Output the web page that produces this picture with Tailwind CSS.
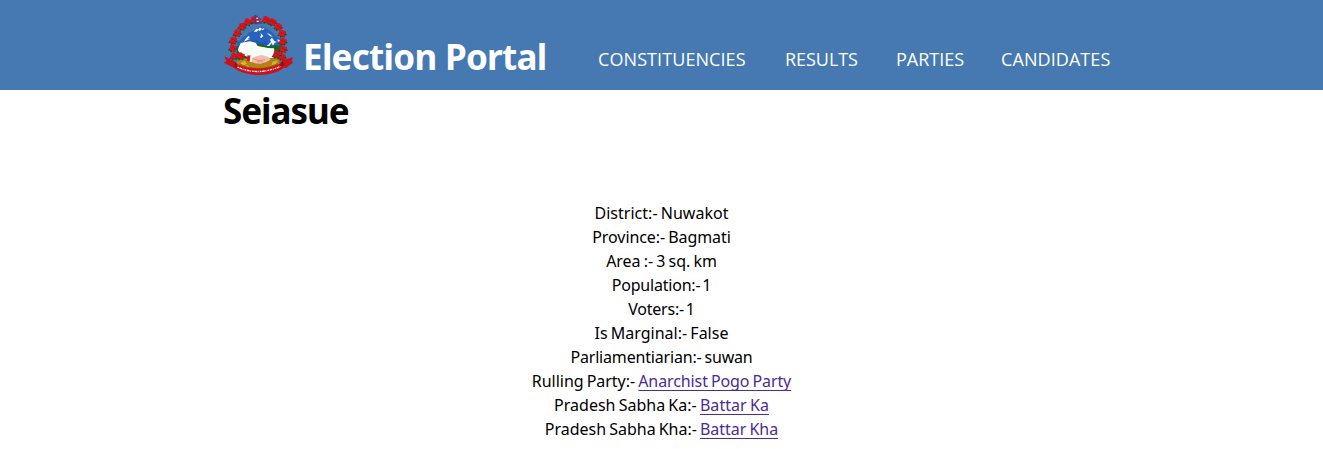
<!DOCTYPE html>
<html lang="en">
<head>
<meta charset="utf-8">
<title>Election Portal</title>
<script src="https://cdn.jsdelivr.net/npm/@tailwindcss/browser@4"></script>
</head>
<body class="bg-white text-black font-['Noto_Sans',sans-serif] overflow-hidden">
<header class="h-[90px] bg-[#4679b2] text-white flex items-start pl-[224px]">
  <svg class="w-[70px] h-[62px] mt-[14px] shrink-0" viewBox="12 12 210 186" fill="none">
    <defs>
      <g id="flower">
        <path d="M-11 2l-4 7 7 0 1 6 6-4 8 3 0-6 7-2-5-8z" fill="#17521f"/>
        <path d="M-3-10l6 1 2 3 6 1 0 7-3 2-1 6-7 0-4-2-6 0-1-7 2-3 1-6z" fill="#e0101c"/>
        <path d="M-4-3h3v3h-3zM3 1h3v3h-3z" fill="#9f0b19"/>
      </g>
    </defs>
    <path d="M50 103Q64 80 78 77L88 67 103 62 114 52 127 49 140 56 151 62 163 74 180 86 186 103 180 122H52z" fill="#2762be"/>
    <path d="M101 65l9-9 5 2 5-6 6 5 8-4-5 8-5-3-4 6-4-4-6 5zM76 88l9-10 5 3-7 5 7 0-9 9-11 4zM140 68l10 5 9 9-10-5zM122 69l8 9-7 7-3-5 3-2zM65 104l12-9 4 4-15 9zM150 89l6-6 7 10 8 3-7 2-5 9-4-8-7 9-8-1 13-11zM173 87l9 6 3 8-12-8z" fill="#f4f8fc"/>
    <path d="M70 97l17-9 8 7 14-6 13 8 17-4 8 10-23 6-37-6z" fill="#2157b5"/>
    <path d="M51 111l16-11-9 21 29 14 25 5 29 5 22 1 16-8-9 22-27 12-41-1-29-9-14-15-9-17z" fill="#18601f"/>
    <path d="M96 104l25-2 20 7 26-3 19 1-6 22-14 10-28-13-28-8z" fill="#1c6422"/>
    <path d="M62 99L89 94 107 98 113 108 144 114 162 115 164 138 154 146 121 149 91 144 62 135 53 119z" fill="#f5fff7"/>
    <path d="M61 133l29 10 29 6 39-4-8 9-31 4-29-5-24-8z" fill="#1b6325"/>
    <path d="M51 152l19-7 31 4 47-3 33-4-3 17 7 10-28 15-39 5-41-5-27-15z" fill="#b58312"/>
    <path d="M61 159l13-7 7 9-11 6zM75 171l8-6 6 8-7 5zM157 156l16-5-6 12-12 3zM150 170l11-3-4 9-12 3z" fill="#d9b335"/>
    <path d="M57 168q57 26 116-1M58 162q58 28 116-1" stroke="#765d0e" stroke-width="2"/>
    <path d="M92 147l18-9 16-3 18 5 7 9-12 7-17 5-17-1-15-6z" fill="#f4beaf"/>
    <path d="M102 147l15 5 18-3M111 155l18 1" stroke="#ca786f" stroke-width="2"/>
    <path d="M82 136l12 1-3 18-10-2z" fill="#e0111b"/><path d="M91 138l6 1-3 17-5-1z" fill="#fff"/>
    <use href="#flower" x="102" y="29"/><use href="#flower" x="83" y="35"/><use href="#flower" x="66" y="49"/><use href="#flower" x="52" y="68"/><use href="#flower" x="40" y="90"/><use href="#flower" x="39" y="113"/><use href="#flower" x="43" y="137"/><use href="#flower" x="63" y="137"/>
    <use href="#flower" x="138" y="28"/><use href="#flower" x="158" y="35"/><use href="#flower" x="175" y="49"/><use href="#flower" x="187" y="69"/><use href="#flower" x="189" y="93"/><use href="#flower" x="190" y="116"/><use href="#flower" x="186" y="139"/><use href="#flower" x="170" y="132"/>
    <path d="M105 15v27" stroke="#244fa9" stroke-width="3"/>
    <path d="M106 16l17 12h-9l11 12h-19z" fill="#cf1632" stroke="#263b88" stroke-width="2"/>
    <path d="M109 23h6v3h-6zM110 32h6v4h-6z" fill="#fff"/>
    <path d="M13 139l29 14 13 11Q116 188 179 161l9-11 31-8-4 11 5 4-20 16-8 0Q166 194 117 195 69 194 42 174L12 158l7-6z" fill="#cf1019"/>
    <path d="M45 155l9 18-11-2zM188 151l-10 18 15-3z" fill="#8f1117"/>
    <path d="M52 171Q114 199 181 169" stroke="#ffe7e7" stroke-width="4" stroke-dasharray="5 2 8 2 3 3"/>
  </svg>
  <div class="ml-[7px] pl-[2px] mt-[33px] w-[297px] shrink-0 text-[35px] leading-[48px] font-bold tracking-[-0.72px] whitespace-nowrap">Election Portal</div>
  <nav class="mt-[47px] flex text-[18px] leading-6 font-['Open_Sans',sans-serif] whitespace-nowrap">
    <a class="w-[187px] tracking-[0.08px]">CONSTITUENCIES</a>
    <a class="w-[111px] tracking-[-0.05px]">RESULTS</a>
    <a class="w-[105px]">PARTIES</a>
    <a class="tracking-[0.08px]">CANDIDATES</a>
  </nav>
</header>
<main>
  <h1 class="pl-[223px] h-[111px] text-[35px] leading-[42px] font-bold tracking-[-1.05px]">Seiasue</h1>
  <div class="text-center text-[16px] leading-6 [word-spacing:-1px] whitespace-nowrap">
    <p class="tracking-[0.02px]">District:- Nuwakot</p>
    <p class="tracking-[-0.07px]">Province:- Bagmati</p>
    <p class="tracking-[-0.02px]">Area :- 3 sq. km</p>
    <p class="tracking-[-0.2px] [word-spacing:-2px]">Population:- 1</p>
    <p class="tracking-[-0.25px] [word-spacing:-2px]">Voters:- 1</p>
    <p>Is Marginal:- False</p>
    <p class="tracking-[-0.18px]">Parliamentiarian:- suwan</p>
    <p class="tracking-[-0.03px]">Rulling Party:- <a class="text-[#4c2c92] underline decoration-1 underline-offset-[3px] [text-decoration-skip-ink:none] tracking-[-0.1px]">Anarchist Pogo Party</a></p>
    <p class="tracking-[0.01px]">Pradesh Sabha Ka:- <a class="text-[#4c2c92] underline decoration-1 underline-offset-[3px] [text-decoration-skip-ink:none] tracking-[0.05px]">Battar Ka</a></p>
    <p class="tracking-[-0.02px]">Pradesh Sabha Kha:- <a class="text-[#4c2c92] underline decoration-1 underline-offset-[3px] [text-decoration-skip-ink:none] tracking-[-0.03px]">Battar Kha</a></p>
  </div>
</main>
</body>
</html>
